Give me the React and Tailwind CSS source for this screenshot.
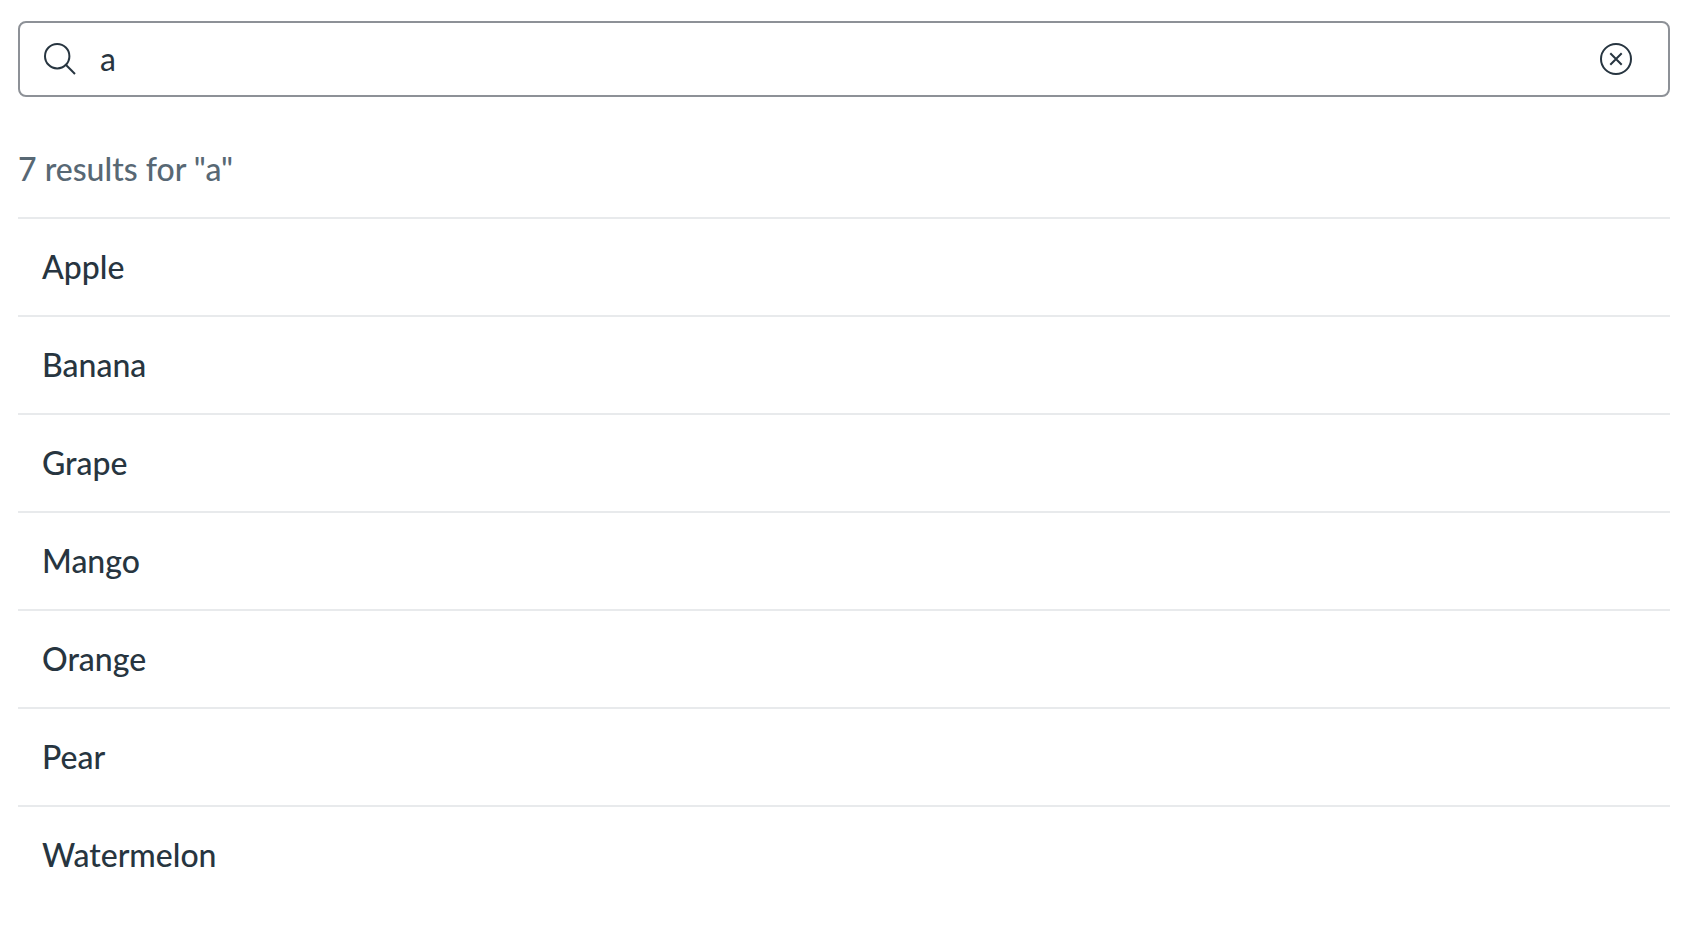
const fruits = ['Apple', 'Banana', 'Grape', 'Mango', 'Orange', 'Pear', 'Watermelon'];

export default function App() {
  return (
    <main className="min-h-screen bg-white pt-[21px] pr-5 pl-[18px] font-[Lato,sans-serif] text-[32px] leading-[48px] text-[#273540]">
      <form role="search" onSubmit={(e) => e.preventDefault()} className="flex h-[76px] items-center rounded-lg border-2 border-[#8d9197] pr-9 pl-6">
        <svg viewBox="0 0 32 32" className="size-8 shrink-0" fill="none" stroke="currentColor" strokeWidth="2" aria-hidden="true">
          <circle cx="13.2" cy="13.2" r="12.2" />
          <path d="M21.8 21.8 31 31" />
        </svg>
        <input type="text" aria-label="Search fruits" defaultValue="a" className="ml-6 min-w-0 flex-1 bg-transparent outline-none" />
        <button type="button" aria-label="Clear search" className="shrink-0">
          <svg viewBox="0 0 32 32" className="size-8" fill="none" stroke="currentColor" strokeWidth="2" aria-hidden="true">
            <circle cx="16" cy="16" r="15" />
            <path d="m10.3 10.3 11.4 11.4M21.7 10.3 10.3 21.7" />
          </svg>
        </button>
      </form>
      <p className="mt-12 mb-6 font-medium text-[#586874]">7 results for "a"</p>
      <ul className="font-medium">
        {fruits.map((fruit) => (
          <li key={fruit} className="border-t-2 border-[#e8eaec] px-6 py-6">{fruit}</li>
        ))}
      </ul>
    </main>
  );
}
